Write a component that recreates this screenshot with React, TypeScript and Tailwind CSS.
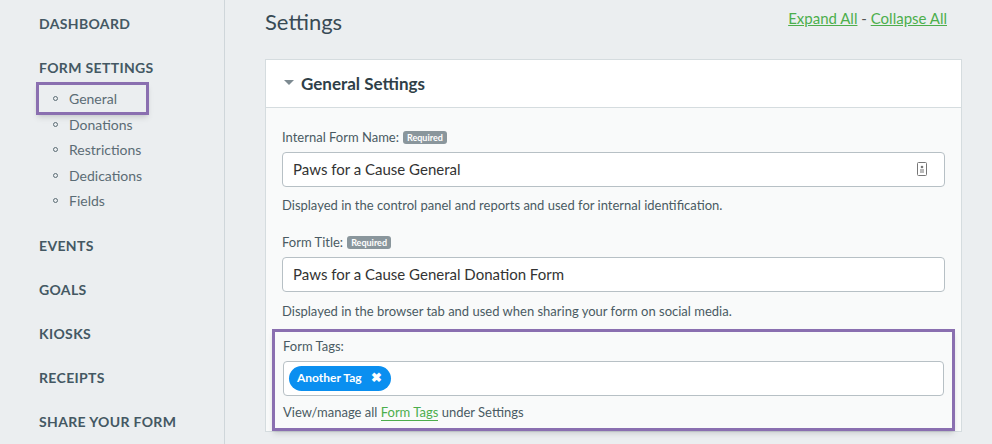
import React from 'react';

const subItems = ['General', 'Donations', 'Restrictions', 'Dedications', 'Fields'];

const Required = () => (
  <span className="ml-1 inline-block rounded-[3px] bg-[#8a969c] px-[4px] py-[1px] text-[9px] font-bold leading-[11px] text-white">Required</span>
);

const App: React.FC = () => {
  return (
    <div className="flex h-[444px] w-[992px] overflow-hidden bg-[#ebeef0] text-[#384a55]" style={{ fontFamily: 'Lato, "Open Sans", sans-serif' }}>
      {/* Sidebar */}
      <div className="w-[225px] shrink-0 border-r border-[#cfd6da] pl-[39px] pt-[13px]">
        <div className="text-[14px] font-bold tracking-wide text-[#445863]">DASHBOARD</div>
        <div className="mt-[23px] text-[14px] font-bold tracking-wide text-[#445863]">FORM SETTINGS</div>
        <ul className="mt-[8px]">
          {subItems.map((s, i) => (
            <li key={s} className="relative flex h-[25.5px] items-center text-[14px] text-[#5b6c75]">
              <span className="ml-[14px] mr-[11px] inline-block h-[5px] w-[5px] rounded-full border border-[#5b6c75]" />
              {s}
              {i === 0 && (
                <span className="absolute left-[-3px] top-[-4px] h-[33px] w-[113px] border-[3px] border-[#8a6fb0] shadow-md" />
              )}
            </li>
          ))}
        </ul>
        {['EVENTS', 'GOALS', 'KIOSKS', 'RECEIPTS', 'SHARE YOUR FORM'].map((s, i) => (
          <div key={s} className={`${i === 0 ? 'mt-[23px]' : 'mt-[27px]'} h-[17px] text-[14px] font-bold leading-[17px] tracking-wide text-[#445863]`}>{s}</div>
        ))}
      </div>

      {/* Main */}
      <div className="flex-1 pl-[40px] pr-[30px]">
        <div className="flex h-[59px] items-start justify-between">
          <h1 className="mt-[5px] text-[22px] text-[#384a55]">Settings</h1>
          <div className="mt-[7px] pr-[15px] text-[15px] text-[#555]">
            <a className="text-[#4cae4c] underline">Expand All</a> - <a className="text-[#4cae4c] underline">Collapse All</a>
          </div>
        </div>
        <div className="border border-[#d5dcdf] bg-[#f9fafa]">
          <div className="flex h-[48px] items-center border-b border-[#d5dcdf] bg-white pl-[18px]">
            <span className="mr-[7px] mt-[-2px] inline-block h-0 w-0 border-x-[5px] border-t-[5px] border-x-transparent border-t-[#7d8a91]" />
            <span className="text-[17px] font-bold text-[#2f3f48]">General Settings</span>
          </div>
          <div className="px-[16px] pt-[20px]">
            <div className="flex items-center text-[13px] text-[#4a5a63]">Internal Form Name: <Required /></div>
            <div className="mt-[4px] flex h-[35px] items-center justify-between rounded-[4px] border border-[#b7c0c5] bg-white px-[10px] text-[15px] text-[#333]">
              Paws for a Cause General
              <svg width="10" height="14" viewBox="0 0 10 14" className="mr-[7px]">
                <rect x="0.5" y="0.5" width="9" height="13" rx="1" fill="none" stroke="#777" />
                <circle cx="5" cy="5" r="1.3" fill="#777" />
                <rect x="3" y="7.5" width="4" height="1" fill="#777" />
                <rect x="3" y="9.5" width="4" height="1" fill="#777" />
              </svg>
            </div>
            <div className="mt-[9px] text-[13px] text-[#4a5a63]">Displayed in the control panel and reports and used for internal identification.</div>
            <div className="mt-[18px] flex items-center text-[13px] text-[#4a5a63]">Form Title: <Required /></div>
            <div className="mt-[4px] flex h-[35px] items-center rounded-[4px] border border-[#b7c0c5] bg-white px-[10px] text-[15px] text-[#333]">
              Paws for a Cause General Donation Form
            </div>
            <div className="mt-[10px] text-[13px] text-[#4a5a63]">Displayed in the browser tab and used when sharing your form on social media.</div>
            <div className="-mx-[10px] mt-[8px] border-[3px] border-[#8a6fb0] px-[8px] pb-[6px] pt-[5px] shadow-md">
              <div className="text-[13px] text-[#4a5a63]">Form Tags:</div>
              <div className="mt-[4px] flex h-[35px] items-center rounded-[4px] border border-[#b7c0c5] bg-white px-[5px]">
                <span className="flex h-[25px] items-center rounded-full bg-[#0a8ff0] pl-[8px] pr-[9px] text-[12px] font-bold text-white">
                  Another Tag <span className="ml-[9px] text-[13px]">✖</span>
                </span>
              </div>
              <div className="mt-[7px] text-[13px] text-[#4a5a63]">
                View/manage all <span className="border-b border-[#4cae4c] text-[#4cae4c]">Form Tags</span> under Settings
              </div>
            </div>
          </div>
        </div>
      </div>
    </div>
  );
};

export default App;
